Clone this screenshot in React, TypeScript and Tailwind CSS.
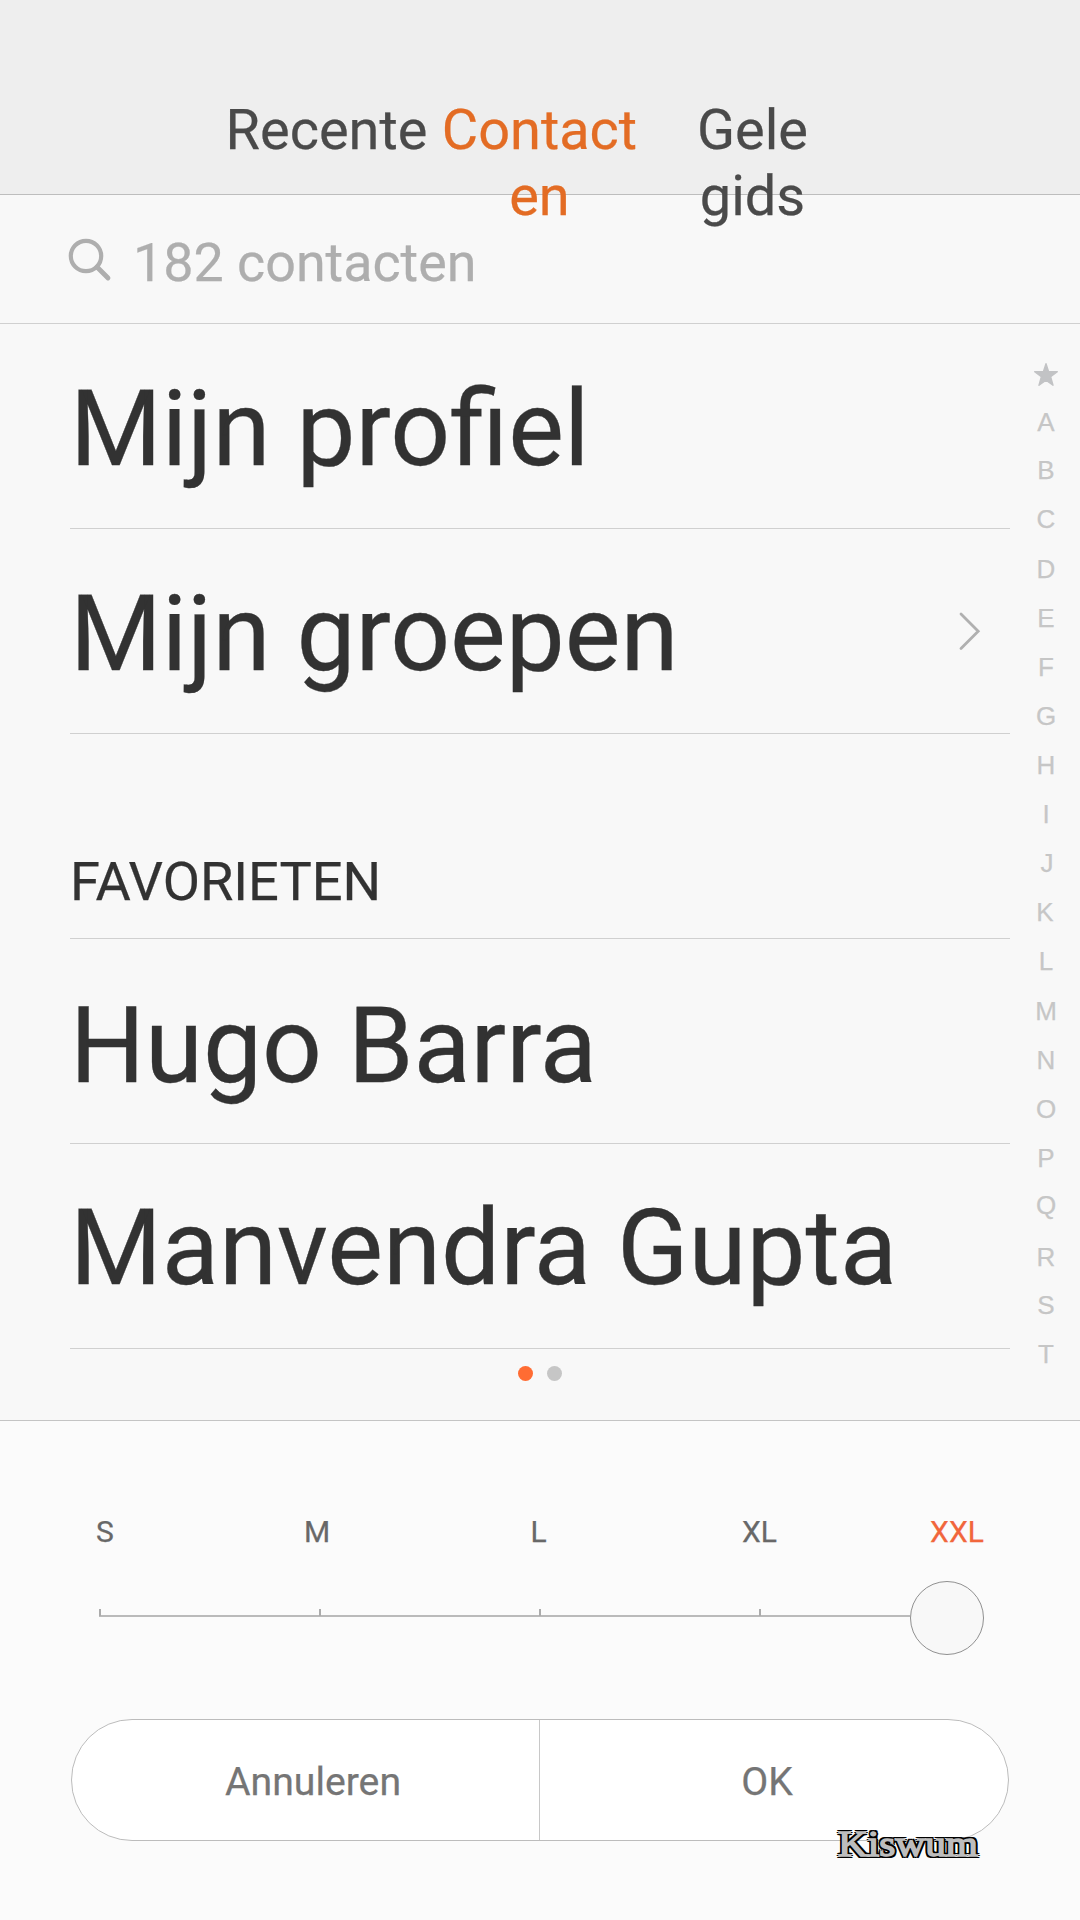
import { useState } from 'react';
import clsx from 'clsx';

interface IndexLetter {
  letter: string;
  nudge?: string;
}

const TABS = [
  { id: 'recent', lines: ['Recente'] },
  { id: 'contacts', lines: ['Contact', 'en'] },
  { id: 'yellow', lines: ['Gele', 'gids'] },
];

const INDEX: IndexLetter[] = [
  { letter: 'A' }, { letter: 'B', nudge: '-translate-y-px' }, { letter: 'C', nudge: '-translate-y-px' },
  { letter: 'D' }, { letter: 'E' }, { letter: 'F' }, { letter: 'G' }, { letter: 'H' }, { letter: 'I' },
  { letter: 'J', nudge: 'translate-x-px' }, { letter: 'K', nudge: '-translate-x-px' }, { letter: 'L', nudge: '-translate-y-px' },
  { letter: 'M' }, { letter: 'N' }, { letter: 'O' }, { letter: 'P' }, { letter: 'Q', nudge: '-translate-y-[2px]' },
  { letter: 'R', nudge: 'translate-y-px' }, { letter: 'S' }, { letter: 'T' },
];

const SIZES = [
  { label: 'S', width: 'w-[66px]' },
  { label: 'M', width: 'w-[358px]' },
  { label: 'L', width: 'w-[85px]' },
  { label: 'XL', width: 'w-[357px]' },
  { label: 'XXL', width: 'w-[38px]' },
];

function Row({ name, chevron }: { name: string; chevron?: boolean }) {
  return (
    <div className="flex h-full items-start justify-between border-b border-[#d0d0d0]">
      <p className="whitespace-nowrap text-[105.1px] leading-[123px] text-[#323232] [-webkit-text-stroke:0.3px_#323232]">{name}</p>
      {chevron && (
        <svg className="mr-[29px] mt-[38px]" width="22" height="40" viewBox="0 0 22 40" fill="none">
          <path d="M2 3 L19.2 20.2 L2 37.4" stroke="#b0b0b0" strokeWidth="2.8" strokeLinecap="round" />
        </svg>
      )}
    </div>
  );
}

export default function App() {
  const [tab, setTab] = useState('contacts');
  const [size, setSize] = useState('XXL');

  return (
    <div className="flex h-[1920px] w-[1080px] flex-col overflow-hidden bg-[#f8f8f8] font-['Roboto',sans-serif] [-webkit-text-stroke:0.25px_currentColor]">
      <header className="relative flex h-[195px] shrink-0 justify-center border-b border-[#bdbdbd] bg-[#eeeeee] pr-[1px] pt-[97px]">
        {TABS.map(t => (
          <button
            key={t.id}
            onClick={() => setTab(t.id)}
            className={clsx('flex w-[213px] flex-col items-center text-[55.9px] leading-[66px]', tab === t.id ? 'text-[#e36c24]' : 'text-[#4a4a4a]')}
          >
            {t.lines.map(line => <span key={line} className="whitespace-nowrap">{line}</span>)}
          </button>
        ))}
      </header>

      <div className="flex h-[129px] shrink-0 items-start border-b border-[#d0d0d0] pl-[68px]">
        <svg className="mt-[43px]" width="44" height="44" viewBox="0 0 44 44" fill="none" stroke="#aeaeae">
          <circle cx="18" cy="18" r="15.2" strokeWidth="4.2" />
          <path d="M29 29 L40 40" strokeWidth="4.8" strokeLinecap="round" />
        </svg>
        <p className="ml-[21px] mt-[36px] whitespace-nowrap text-[53.8px] leading-[64px] text-[#aeaeae]">182 contacten</p>
      </div>

      <main className="flex h-[1097px] shrink-0 border-b border-[#c4c4c4]">
        <div className="ml-[70px] flex w-[940px] flex-col">
          <div className="h-[205px] pt-[44px]"><Row name="Mijn profiel" /></div>
          <div className="h-[205px] pt-[44px]"><Row name="Mijn groepen" chevron /></div>
          <h2 className="h-[205px] border-b border-[#d0d0d0] pt-[116px] text-[54.2px] leading-[64px] text-[#323232]">FAVORIETEN</h2>
          <div className="h-[205px] pt-[46px]"><Row name="Hugo Barra" /></div>
          <div className="h-[205px] pt-[43px]"><Row name="Manvendra Gupta" /></div>
          <div className="flex gap-[14px] pl-[448px] pt-[17px]">
            <span className="size-[15px] rounded-full bg-[#ff6c33]" />
            <span className="size-[15px] rounded-full bg-[#c6c6c6]" />
          </div>
        </div>

        <nav className="ml-[11px] flex w-[50px] flex-col items-center pt-[38px] font-['Liberation_Sans',Arial,sans-serif] text-[26px] leading-[49px] text-[#c6c6c6]">
          <svg className="mb-[11px]" width="26" height="25" viewBox="0 0 26 25" fill="#c2c3c5" stroke="#c2c3c5" strokeWidth="1.4" strokeLinejoin="round">
            <path d="M13 1.7 L15.6 9.6 L24.3 9.7 L17.6 14.8 L20 23.3 L13 18.3 L6 23.3 L8.4 14.8 L1.7 9.7 L10.4 9.6 Z" />
          </svg>
          {INDEX.map(i => <span key={i.letter} className={clsx('h-[49.05px]', i.nudge)}>{i.letter}</span>)}
        </nav>
      </main>

      <section className="relative flex grow flex-col bg-[#fbfbfb] pt-[93px]">
        <div className="ml-[72px] flex text-[30px] leading-[35px]">
          {SIZES.map(s => (
            <button
              key={s.label}
              onClick={() => setSize(s.label)}
              className={clsx('flex shrink-0 justify-center', s.width, size === s.label ? 'text-[#f1663c]' : 'text-[#686868]')}
            >
              {s.label}
            </button>
          ))}
        </div>

        <div className="ml-[99px] mt-[32px] flex h-[74px] items-start">
          <div className="mt-[28px] flex h-[8px] w-[811px] border-b-2 border-[#bababa]">
            {[0, 1, 2, 3].map(n => <span key={n} className="mr-[218px] h-[7px] w-[2px] shrink-0 bg-[#ababab] last:mr-0" />)}
          </div>
          <div className="size-[74px] shrink-0 rounded-full border border-[#909090] bg-[#f8f8f8]" />
        </div>

        <div className="ml-[71px] mt-[64px] flex h-[122px] w-[938px] overflow-hidden rounded-[61px] border border-[#bcbcbc] bg-white text-[39.2px] leading-[46px] text-[#757575]">
          <button className="w-[468px] border-r border-[#c8c8c8] pl-[15px] pt-[3px]">Annuleren</button>
          <button className="grow pr-[14px] pt-[3px]">OK</button>
        </div>

        <span className="absolute left-[838px] top-[402px] origin-left scale-x-[1.18] whitespace-nowrap font-['Liberation_Serif',serif] text-[35px] leading-[44px] text-[#bdbdbd] [-webkit-text-stroke:1.5px_#bdbdbd] [text-shadow:2.2px_0_#000,-2.2px_0_#000,0_2.4px_#000,0_-2.4px_#000,1.8px_1.8px_#000,-1.8px_1.8px_#000,1.8px_-1.8px_#000,-1.8px_-1.8px_#000]">
          Kiswum
        </span>
      </section>
    </div>
  );
}
